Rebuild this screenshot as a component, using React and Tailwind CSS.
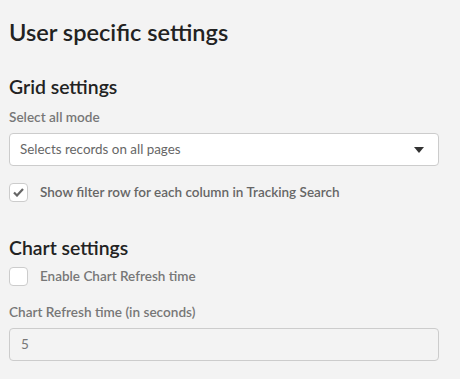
import React from "react";

export default function App() {
  return (
    <div className="min-h-[379px] w-[460px] bg-[#f3f3f3] px-[9px] pt-[18px] text-[#222]" style={{ fontFamily: "Lato, 'Open Sans', sans-serif" }}>
      <h1 className="text-[23.6px] font-semibold leading-[28px]">User specific settings</h1>
      <h2 className="mt-[29px] text-[19.4px] font-semibold leading-[24px]">Grid settings</h2>
      <div className="mt-[9px] text-[13.6px] font-semibold leading-[18px] text-[#777]">Select all mode</div>
      <div className="mt-[7px] flex h-[33px] w-[430px] items-center justify-between rounded-[4px] border border-[#ccc] bg-white pl-[10px] pr-[14px]">
        <span className="text-[13.4px] text-[#666]">Selects records on all pages</span>
        <svg width="10" height="6" viewBox="0 0 10 6"><path d="M0 0h10L5 6z" fill="#333" /></svg>
      </div>
      <label className="mt-[16px] flex items-center gap-[12px]">
        <span className="flex h-[19px] w-[19px] items-center justify-center rounded-[4px] border border-[#ccc] bg-white">
          <svg width="11" height="9" viewBox="0 0 11 9"><path d="M1 4.5l3 3L10 1" fill="none" stroke="#666" strokeWidth="2.2" /></svg>
        </span>
        <span className="text-[13.5px] font-semibold text-[#666]">Show filter row for each column in Tracking Search</span>
      </label>
      <h2 className="mt-[34px] text-[19.4px] font-semibold leading-[24px]">Chart settings</h2>
      <label className="mt-[6px] flex items-center gap-[12px]">
        <span className="h-[19px] w-[19px] rounded-[4px] border border-[#ccc] bg-white" />
        <span className="text-[13.5px] font-semibold text-[#777]">Enable Chart Refresh time</span>
      </label>
      <div className="mt-[16px] text-[13.6px] font-semibold leading-[18px] text-[#777]">Chart Refresh time (in seconds)</div>
      <div className="mt-[7px] flex h-[33px] w-[430px] items-center rounded-[4px] border border-[#ccc] bg-[#f3f3f3] pl-[11px]">
        <span className="text-[13.5px] text-[#777]">5</span>
      </div>
    </div>
  );
}
